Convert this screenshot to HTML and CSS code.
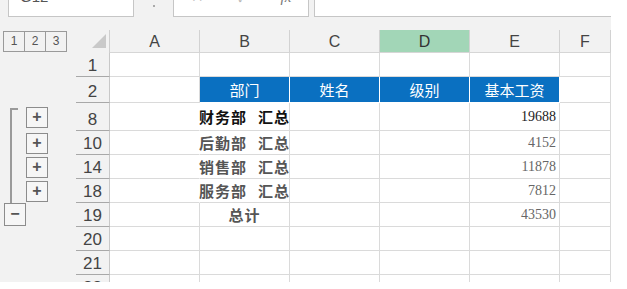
FILE: index.html
```html
<!DOCTYPE html>
<html>
<head>
	<title>分类汇总</title>
	<meta charset="utf-8">
	<link rel="stylesheet" href="styles.css">
</head>
<body>
	<div class="app">
		<div class="fbar">
			<div class="namebox">G12</div>
			<span class="grip"></span>
			<div class="fxbox"><span>✕</span><span>✓</span><span class="fx">fx</span></div>
			<div class="formula"></div>
		</div>

		<div class="sheet">
			<!-- 列标题 -->
			<div class="ol levels"><span>1</span><span>2</span><span>3</span></div>
			<div class="corner"><i></i></div>
			<div class="ch">A</div>
			<div class="ch">B</div>
			<div class="ch">C</div>
			<div class="ch sel">D</div>
			<div class="ch">E</div>
			<div class="ch">F</div>

			<div class="ol"></div>
			<div class="rh">1</div>
			<div class="c"></div><div class="c"></div><div class="c"></div><div class="c"></div><div class="c"></div><div class="c"></div>

			<div class="ol"></div>
			<div class="rh">2</div>
			<div class="c"></div>
			<div class="c hd">部门</div>
			<div class="c hd">姓名</div>
			<div class="c hd">级别</div>
			<div class="c hd">基本工资</div>
			<div class="c"></div>

			<div class="ol grp"><span class="line first"></span><span class="btn">+</span></div>
			<div class="rh">8</div>
			<div class="c nr"></div>
			<div class="c sum strong"><span>财务部 汇总</span></div>
			<div class="c"></div><div class="c"></div>
			<div class="c num strong">19688</div>
			<div class="c"></div>

			<div class="ol grp"><span class="line"></span><span class="btn">+</span></div>
			<div class="rh">10</div>
			<div class="c nr"></div>
			<div class="c sum"><span>后勤部 汇总</span></div>
			<div class="c"></div><div class="c"></div>
			<div class="c num">4152</div>
			<div class="c"></div>

			<div class="ol grp"><span class="line"></span><span class="btn">+</span></div>
			<div class="rh">14</div>
			<div class="c nr"></div>
			<div class="c sum"><span>销售部 汇总</span></div>
			<div class="c"></div><div class="c"></div>
			<div class="c num">11878</div>
			<div class="c"></div>

			<div class="ol grp"><span class="line"></span><span class="btn">+</span></div>
			<div class="rh">18</div>
			<div class="c nr"></div>
			<div class="c sum"><span>服务部 汇总</span></div>
			<div class="c"></div><div class="c"></div>
			<div class="c num">7812</div>
			<div class="c"></div>

			<div class="ol"><span class="btn minus">−</span></div>
			<div class="rh">19</div>
			<div class="c"></div>
			<div class="c sum"><span>总计</span></div>
			<div class="c"></div><div class="c"></div>
			<div class="c num">43530</div>
			<div class="c"></div>

			<div class="ol"></div>
			<div class="rh">20</div>
			<div class="c"></div><div class="c"></div><div class="c"></div><div class="c"></div><div class="c"></div><div class="c"></div>

			<div class="ol"></div>
			<div class="rh">21</div>
			<div class="c"></div><div class="c"></div><div class="c"></div><div class="c"></div><div class="c"></div><div class="c"></div>

			<div class="ol"></div>
			<div class="rh">22</div>
			<div class="c"></div><div class="c"></div><div class="c"></div><div class="c"></div><div class="c"></div><div class="c"></div>
		</div>
	</div>
</body>
</html>
```

FILE: styles.css
```css
body{
	margin: 0;
	background: #fff;
	font-family: "Liberation Sans", "Noto Sans CJK SC", sans-serif;
}
.app{
	width: 611px;
	height: 282px;
	overflow: hidden;
	background: #f2f2f2;
}
/*编辑栏*/
.fbar{
	height: 17px;
	overflow: hidden;
	display: flex;
	align-items: flex-end;
}
.namebox, .fxbox, .formula{
	height: 30px;
	box-sizing: border-box;
	background: #fff;
	border: 1px solid #c6c6c6;
	flex: none;
}
.namebox{
	margin-left: 8px;
	width: 126px;
	padding: 0 0 0 11px;
	font-size: 15px;
	line-height: 18px;
	color: #555;
}
.grip{
	width: 2px;
	height: 2px;
	margin: 0 18px 10px 19px;
	background: #aaa;
	flex: none;
}
.fxbox{
	width: 136px;
	display: flex;
	justify-content: space-around;
	padding-top: 0;
	font-size: 15px;
	line-height: 18px;
	color: #b8b8b8;
}
.fxbox .fx{
	font-family: "Liberation Serif", serif;
	font-style: italic;
	color: #777;
}
.formula{
	margin-left: 5px;
	flex: 1;
	border-right: none;
}
/*表格*/
.sheet{
	margin-top: 13px;
	display: grid;
	grid-template-columns: 76px 34px 90px 90px 90px 90px 90px 51px;
	grid-template-rows: 23px 24px 26px 28px 24px 24px 24px 24px 24px 24px 24px;
	background: #fff;
}
.ol{
	background: #f2f2f2;
	display: flex;
}
.levels{
	align-items: flex-start;
	padding: 1px 0 0 3px;
}
.levels span{
	width: 22px;
	height: 21px;
	box-sizing: border-box;
	border: 1px solid #9a9a9a;
	margin-right: -1px;
	font-size: 12px;
	line-height: 19px;
	text-align: center;
	color: #555;
}
.corner{
	background: #f2f2f2;
	border-right: 1px solid #cfcfcf;
	padding: 4px 0 0 16px;
}
.corner i{
	display: block;
	width: 14px;
	height: 14px;
	background: #c9c9c9;
	clip-path: polygon(100% 0, 100% 100%, 0 100%);
}
.ch{
	background: #f2f2f2;
	border-right: 1px solid #d2d2d2;
	border-bottom: 1px solid #d6d6d6;
	text-align: center;
	font-size: 16px;
	line-height: 24px;
	color: #444;
}
.ch.sel{
	background: #a2d6b7;
	color: #333;
}
.rh{
	background: #f2f2f2;
	border-right: 1px solid #c8c8c8;
	border-bottom: 1px solid #a8a8a8;
	display: flex;
	align-items: flex-end;
	justify-content: center;
	font-size: 17px;
	line-height: 20px;
	color: #444;
}
.c{
	border-right: 1px solid #dadada;
	border-bottom: 1px solid #dadada;
	display: flex;
	align-items: center;
	justify-content: center;
	white-space: nowrap;
	font-size: 15px;
	color: #555;
}
.c.nr{
	border-right-color: #fff;
}
.hd{
	background: #0a70c1;
	color: #fff;
	border-right-color: #fff;
	border-bottom-color: #fff;
}
.sum{
	font-weight: bold;
	color: #555;
	letter-spacing: 1px;
	word-spacing: 6px;
}
.strong{
	color: #111;
}
.num{
	justify-content: flex-end;
	padding-right: 3px;
	font-family: "Liberation Serif", serif;
	font-size: 14px;
	color: #666;
	letter-spacing: 0;
}
.num.strong{
	color: #222;
}
/*分级按钮*/
.grp{
	padding-left: 10px;
	align-items: center;
}
.grp .line{
	align-self: stretch;
	width: 6px;
	border-left: 2px solid #9a9a9a;
	margin-right: 8px;
}
.grp .line.first{
	margin-top: 5px;
	border-top: 2px solid #9a9a9a;
}
.btn{
	width: 22px;
	height: 21px;
	box-sizing: border-box;
	border: 1px solid #8c8c8c;
	background: #f6f6f6;
	font-size: 16px;
	font-weight: bold;
	line-height: 18px;
	text-align: center;
	color: #555;
}
.btn.minus{
	margin-left: 4px;
	height: 23px;
	line-height: 20px;
}
```
